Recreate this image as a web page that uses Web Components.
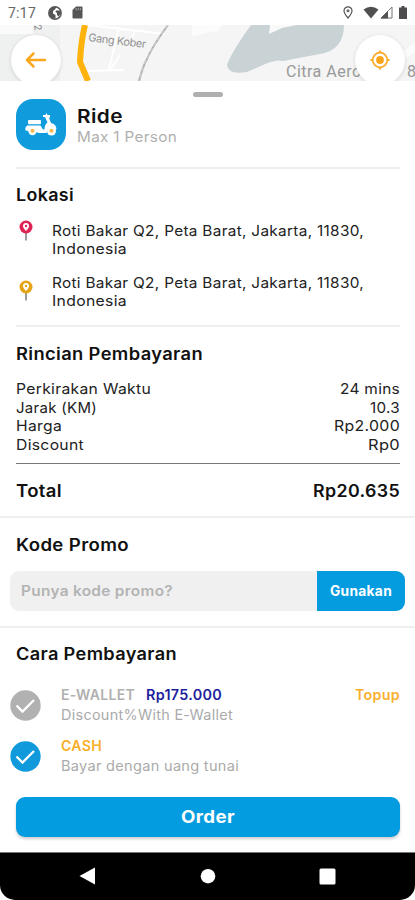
<!DOCTYPE html>
<html lang="id">
<head>
<meta charset="utf-8">
<title>Ride order</title>
<style>
html,body{margin:0;background:#fff}
body{width:415px;height:900px;overflow:hidden;font-family:Inter,"Liberation Sans",sans-serif}
</style>
</head>
<body>
<ride-app></ride-app>
<script>
const define = (name, html, after) => {
  const tpl = document.createElement('template');
  tpl.innerHTML = html;
  customElements.define(name, class extends HTMLElement {
    connectedCallback() {
      if (this.shadowRoot) return;
      this.attachShadow({mode: 'open'}).append(tpl.content.cloneNode(true));
      if (after) after(this, this.shadowRoot);
    }
  });
};

/* A single line whose letters are widened to fill the width in "w". */
define('fit-text', `<style>
:host{display:block;white-space:pre;flex:none}
span{display:inline-block;vertical-align:top;transform-origin:0 50%;letter-spacing:.02em}
</style><span><slot></slot></span>`, (el, root) => {
  const w = +el.getAttribute('w'), span = root.querySelector('span');
  el.style.width = w + 'px';
  span.style.transform = `scaleX(${w / span.getBoundingClientRect().width})`;
});

define('status-bar', `<style>
:host{display:flex;height:25px;box-sizing:border-box;padding:0 8px 0 8px;align-items:center;background:#fff;color:#666;font:15px/26px Roboto,sans-serif}
svg{display:block;flex:none}.a{margin-left:12px}.b{margin-left:10px}.c{margin-left:auto}.w{margin-left:10px}.e{margin-left:1px}.f{margin-left:6px}
</style>
<fit-text w="28">7:17</fit-text>
<svg class="a" width="14" height="14" viewBox="0 0 14 14"><circle cx="7" cy="7" r="6.200" fill="#fff" stroke="#595959" stroke-width="1.500"/><path d="M1 5L4 1h4.500L7 3.500 5 5v2.500L7.500 9v4L4 12 1 9zM8 4.500h4.500l.5 3-2.500 3L9 9V7L7.500 6z" fill="#555"/></svg>
<svg class="b" width="11" height="13" viewBox="0 0 11 13"><path d="M4 .5h5.500q1 0 1 1v10q0 1-1 1h-8q-1 0-1-1V4z" fill="#555"/><path d="M4.200 2.200v2M6.300 2.200v2M8.400 2.200v2" stroke="#aaa"/></svg>
<svg class="c" width="10" height="13" viewBox="0 0 10 13"><path d="M5 .8a4 4 0 0 0-4 4C1 7.500 5 12 5 12s4-4.500 4-7.200a4 4 0 0 0-4-4z" fill="none" stroke="#555" stroke-width="1.200"/><circle cx="5" cy="4.800" r="1.500" fill="#666"/></svg>
<svg class="w" width="16" height="13" viewBox="0 0 16 13"><path d="M.5 3.500Q8-2 15.500 3.500L8 12.500z" fill="#505050"/></svg>
<svg class="e" width="13" height="13" viewBox="0 0 13 13"><path d="M1 12L12 1v11z" fill="#fff" stroke="#777"/><path d="M.5 12.500L8 5v7.500z" fill="#555"/></svg>
<svg class="f" width="8" height="13" viewBox="0 0 8 13"><path d="M2.500 0h3v1.500H8V13H0V1.500h2.500z" fill="#4d4d4d"/></svg>`);

define('round-button', `<style>
:host{position:absolute;top:10px;width:50px;height:50px;border-radius:50%;background:#fff;box-shadow:0 1px 4px #0002;display:grid;place-items:center}
</style><slot></slot>`);

define('map-view', `<style>
:host{display:block;position:relative;height:56px;overflow:hidden;background:#f4f5f4}
.map{display:block}.back{left:11px}.loc{left:355px}
</style>
<svg class="map" width="415" height="56" viewBox="0 0 415 56">
<path d="M0 0H60V56H0z" fill="#eff0f0"/>
<path d="M192 0h30l-5 6-25 5zM0 0h33v9H0zM398 30l17-12v9l-15 10z" fill="#fff" opacity=".65"/>
<path d="M251 0h93Q344 25 320 29L283 36Q276 34 263 40L247 47Q228 50 227 40Q231 28 251 0z" fill="#c9d2d5"/>
<path d="M270 0h27l-15 3-13 6z" fill="#f8f9f8"/>
<path d="M87 0l78 9M119 2l-10 42M135 5l-3 9M88 46l36-1M111 44l9-14" fill="none" stroke="#fff" stroke-width="2"/>
<path d="M85 0q-4 16-5 37l8 19" fill="none" stroke="#ffb20b" stroke-width="6" stroke-linejoin="round"/>
<path d="M168 0q-16 22-21 34-4 7-8 22" fill="none" stroke="#b2b2b2" stroke-width="2"/><path d="M168 0q-16 22-21 34-4 7-8 22" fill="none" stroke="#d8d8d8" stroke-width="1" stroke-dasharray="4 3"/>
<text transform="translate(88 16) rotate(7)" font-family="Inter,sans-serif" font-size="11" textLength="58" fill="#929292">Gang Kober</text>
<text transform="translate(34 0) rotate(82)" font-family="Inter,sans-serif" font-size="10" fill="#888">2</text>
<text x="286" y="52" font-family="Roboto,sans-serif" font-size="16" textLength="75" fill="#999">Citra Aero</text>
<text x="407" y="52" font-family="Roboto,sans-serif" font-size="16" fill="#999">8</text>
</svg>
<round-button class="back"><svg width="22" height="18" viewBox="0 0 22 18"><path d="M20 9H2.500M8.500 2.500L2 9l6.500 6.500" fill="none" stroke="#f9a81e" stroke-width="2.500" stroke-linecap="round" stroke-linejoin="round"/></svg></round-button>
<round-button class="loc"><svg width="20" height="20" viewBox="0 0 20 20"><circle cx="10" cy="10" r="7.300" fill="none" stroke="#faab28" stroke-width="1.700"/><circle cx="10" cy="10" r="3.900" fill="#f9a51b"/><path d="M10 .5v2M10 17.500v2M.5 10h2M17.500 10h2" stroke="#faab28" stroke-width="2.200"/></svg></round-button>`);

define('ride-header', `<style>
:host{display:flex;height:88px;box-sizing:border-box;margin:0 15px 0 16px;border-bottom:2px solid #efefef;position:relative;padding-top:18px}
.handle{position:absolute;left:177px;top:11px;width:30px;height:5px;border-radius:3px;background:#afafaf}
.icon{width:50px;height:51px;border-radius:17px;background:#109cdc;display:grid;place-items:center}
.text{margin:6px 0 0 11px}.t{font:600 18.500px/22px Inter,sans-serif;color:#111}.s{font:400 14.500px/20px Inter,sans-serif;color:#b0b0b0}
</style>
<i class="handle"></i>
<div class="icon"><svg width="32" height="23" viewBox="0 0 32 23"><path d="M4 7h11q1 0 1 1v2.300q0 1-1 1H4q-1 0-1-1V8q0-1 1-1zM2 12.500h13.500l2.500 4h1.500q0-5 3-7L20 4h-2V2h2.500l.8-2 1.200 2H25v2.300l-1 .7 2 5q5 1 5.500 6l-1.500.5h-7q-1 1-1.500 3.500H14l-3-1L.5 17.500Q0 14 2 12.500z" fill="#fff"/><circle cx="7.500" cy="18" r="4.200" fill="#fff"/><circle cx="26.500" cy="18" r="4.500" fill="#fff"/><path d="M12.500 23q1-2.500 5-2.500t4 2.500z" fill="#109cdc"/><circle cx="7.500" cy="17.800" r="2" fill="#f8b84d"/><circle cx="26.500" cy="17.800" r="2" fill="#f8b84d"/></svg></div>
<div class="text"><fit-text class="t" w="46">Ride</fit-text><fit-text class="s" w="100">Max 1 Person</fit-text></div>`);

define('section-title', `<style>:host{display:block;font:600 17px/24px Inter,sans-serif;color:#111}</style><slot></slot>`);

define('place-row', `<style>
:host{display:flex;height:52px;font:400 14.500px/18.500px Inter,sans-serif;color:#222}
svg{margin:calc(var(--drop,0px) - 1.500px) 18px 0 2px;flex:none}
</style>
<svg width="16" height="22" viewBox="0 0 16 22"><path d="M8 12v8.500" stroke="#666" stroke-width="1.300"/><circle cx="8" cy="7" r="6.500" style="fill:var(--pin)"/><path d="M8 3a3 3 0 0 0-3 3c0 2 3 5 3 5s3-3 3-5a3 3 0 0 0-3-3z" fill="#fff"/><circle cx="8" cy="6" r="1.200" style="fill:var(--pin)"/></svg>
<div><fit-text w="312">Roti Bakar Q2, Peta Barat, Jakarta, 11830,</fit-text><fit-text w="75">Indonesia</fit-text></div>`);

define('price-row', `<style>:host{display:flex;justify-content:space-between;font:400 14.500px/18.500px Inter,sans-serif;color:#222}</style><slot></slot>`);

define('promo-field', `<style>
:host{display:flex;height:40px;margin:0 10px;border-radius:9px;overflow:hidden;font:600 14px/40px Inter,sans-serif;background:#f0f0f0;color:#b3b3b3}
.in{flex:1;padding-left:11px}.btn{width:75px;padding-left:13px;background:#049cdf;color:#fff;font-weight:700}
</style><div class="in"><fit-text w="152">Punya kode promo?</fit-text></div><div class="btn"><fit-text w="62">Gunakan</fit-text></div>`);

define('pay-option', `<style>
:host{display:flex;height:51px;padding:0 15px 0 11px}
svg{margin:4px 20px 0 -1px;flex:none}
.body{flex:1;margin-top:-.5px}.top{display:flex;gap:11px;font:600 14px/20px Inter,sans-serif;color:var(--name,#b0b0b0)}
.sub{font:400 14px/20px Inter,sans-serif;color:#aaa}
</style>
<svg width="31" height="31" viewBox="0 0 31 31"><circle cx="15.500" cy="15.500" r="15.200" style="fill:var(--tick)"/><path d="M6.500 15.500l6 6L24 10" fill="none" stroke="#fff" stroke-width="2.300"/></svg>
<div class="body"><div class="top"><slot></slot></div><div class="sub"><slot name="sub"></slot></div></div>`);

define('order-button', `<style>
:host{display:flex;justify-content:center;height:40px;margin:0 15px 0 16px;border-radius:9px;background:#049ce0;color:#fff;font:700 17.500px/40px Inter,sans-serif;box-shadow:0 2px 3px #0003}
</style><fit-text w="54">Order</fit-text>`);

define('nav-bar', `<style>
:host{display:block;height:48px;background:#000;border-radius:0 0 15px 15px;box-shadow:inset 0 1px #777}
svg{display:block}
</style><svg width="415" height="48" viewBox="0 0 415 48" fill="#fff"><path d="M79.500 24L95 15.500v17z"/><circle cx="208" cy="24.200" r="7.300"/><rect x="319.500" y="16.500" width="16" height="16" rx="1.500"/></svg>`);

define('ride-app', `<style>
:host{display:flex;flex-direction:column;width:415px;height:900px;background:#fff}
section{box-sizing:border-box;flex:none}
.loc{height:158px;margin:0 15px 0 16px;padding-top:14px;border-bottom:2px solid #efefef}
.places{padding-top:14.500px}
.bill{height:191px;padding:15px 15px 0 16px;border-bottom:2px solid #efefef}
.rows{padding:14px 0 9px;border-bottom:1px solid #777}
.total{font-size:17px;font-weight:600;color:#111;line-height:24px;margin-top:15px}
.promo{height:110px;padding-top:15px;border-bottom:2px solid #efefef}
.promo section-title,.pay section-title{margin-left:16px}
promo-field{margin-top:14px}
.pay{height:169px;padding-top:14px}.opts{padding-top:19.500px}
.end{margin-left:auto}
order-button{flex:none}
nav-bar{margin-top:auto}
</style>
<status-bar></status-bar>
<map-view></map-view>
<ride-header></ride-header>
<section class="loc"><section-title><fit-text w="58">Lokasi</fit-text></section-title>
<div class="places"><place-row style="--pin:#df2454"></place-row><place-row style="--pin:#e5a414;--drop:8px"></place-row></div></section>
<section class="bill"><section-title><fit-text w="187">Rincian Pembayaran</fit-text></section-title>
<div class="rows">
<price-row><fit-text w="135">Perkirakan Waktu</fit-text><fit-text w="60">24 mins</fit-text></price-row>
<price-row><fit-text w="81">Jarak (KM)</fit-text><fit-text w="30">10.3</fit-text></price-row>
<price-row><fit-text w="46">Harga</fit-text><fit-text w="66">Rp2.000</fit-text></price-row>
<price-row><fit-text w="68">Discount</fit-text><fit-text w="32">Rp0</fit-text></price-row>
</div>
<price-row class="total"><fit-text w="46">Total</fit-text><fit-text w="87">Rp20.635</fit-text></price-row></section>
<section class="promo"><section-title><fit-text w="113">Kode Promo</fit-text></section-title><promo-field></promo-field></section>
<section class="pay"><section-title><fit-text w="161">Cara Pembayaran</fit-text></section-title>
<div class="opts">
<pay-option style="--tick:#b1b1b1"><fit-text w="74">E-WALLET</fit-text><fit-text w="76" style="color:#1e1f9e">Rp175.000</fit-text><fit-text class="end" w="45" style="color:#f9b02e">Topup</fit-text><fit-text slot="sub" w="172">Discount%With E-Wallet</fit-text></pay-option>
<pay-option style="--tick:#109adb;--name:#f9ae28"><fit-text w="41">CASH</fit-text><fit-text slot="sub" w="178">Bayar dengan uang tunai</fit-text></pay-option>
</div></section>
<order-button></order-button>
<nav-bar></nav-bar>`);
</script>
</body>
</html>
